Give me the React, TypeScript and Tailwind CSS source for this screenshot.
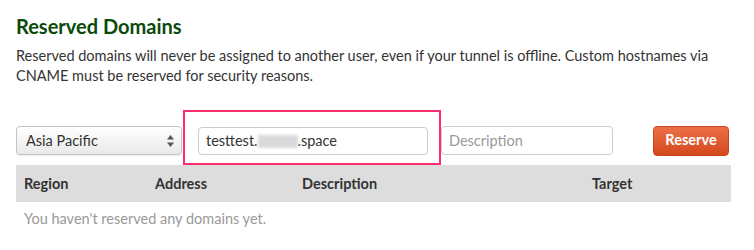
import React from 'react';

const font = { fontFamily: 'Lato, "Open Sans", sans-serif' };

function SelectArrows() {
  return (
    <svg width="7" height="12" viewBox="0 0 7 12" className="text-[#555]">
      <path d="M3.5 0 L7 4.5 H0 Z" fill="currentColor" />
      <path d="M3.5 12 L7 7.5 H0 Z" fill="currentColor" />
    </svg>
  );
}

export default function App() {
  return (
    <div className="w-[754px] h-[250px] bg-white px-4 pt-[12px] text-[#333]" style={font}>
      <h2 className="text-[20px] leading-[28px] font-bold text-[#0b4a0b]">Reserved Domains</h2>
      <p className="mt-[6px] text-[14.5px] leading-[20px] w-[720px]">
        Reserved domains will never be assigned to another user, even if your tunnel is offline. Custom hostnames via
        <br />
        CNAME must be reserved for security reasons.
      </p>

      {/* Reserve form row */}
      <div className="mt-[24px] flex items-start w-[715px]">
        <div className="mt-[16px] w-[166px] h-[29px] flex items-center justify-between pl-[9px] pr-[7px] border border-[#c4c4c4] rounded-[4px] bg-gradient-to-b from-white to-[#e9e9e9] shadow-[0_1px_1px_rgba(0,0,0,0.08)]">
          <span className="text-[14.5px]">Asia Pacific</span>
          <SelectArrows />
        </div>
        <div className="ml-px border-2 border-[#ff2f6d] pt-[15px] pb-[8px] pl-[13px] pr-[11px]">
          <div className="w-[230px] h-[28px] flex items-center px-[7px] border border-[#ccc] rounded-[4px] bg-white text-[14.5px]">
            <span>testtest.</span>
            <span className="inline-block w-[40px] h-[13px] bg-[#d9d9d9] blur-[1.5px]" />
            <span>.space</span>
          </div>
        </div>
        <div className="mt-[16px] w-[172px] h-[29px] flex items-center px-[7px] border border-[#ccc] rounded-[4px] bg-white text-[14.5px] text-[#999]">
          Description
        </div>
        <button className="mt-[16px] ml-[40px] w-[76px] h-[30px] rounded-[4px] border border-[#c9461c] bg-gradient-to-b from-[#ee6f45] to-[#d3481c] text-white text-[14.5px] font-bold pb-[3px]">
          Reserve
        </button>
      </div>

      {/* Table */}
      <div className="w-[715px]">
        <div className="grid grid-cols-[131px_147px_290px_1fr] h-[37px] items-center bg-[#dddddd] pl-[8px] text-[14.5px] font-bold">
          <span>Region</span>
          <span>Address</span>
          <span>Description</span>
          <span>Target</span>
        </div>
        <p className="mt-[7px] pl-[8px] text-[14.5px] leading-[20px] text-[#999]">You haven't reserved any domains yet.</p>
      </div>
    </div>
  );
}
